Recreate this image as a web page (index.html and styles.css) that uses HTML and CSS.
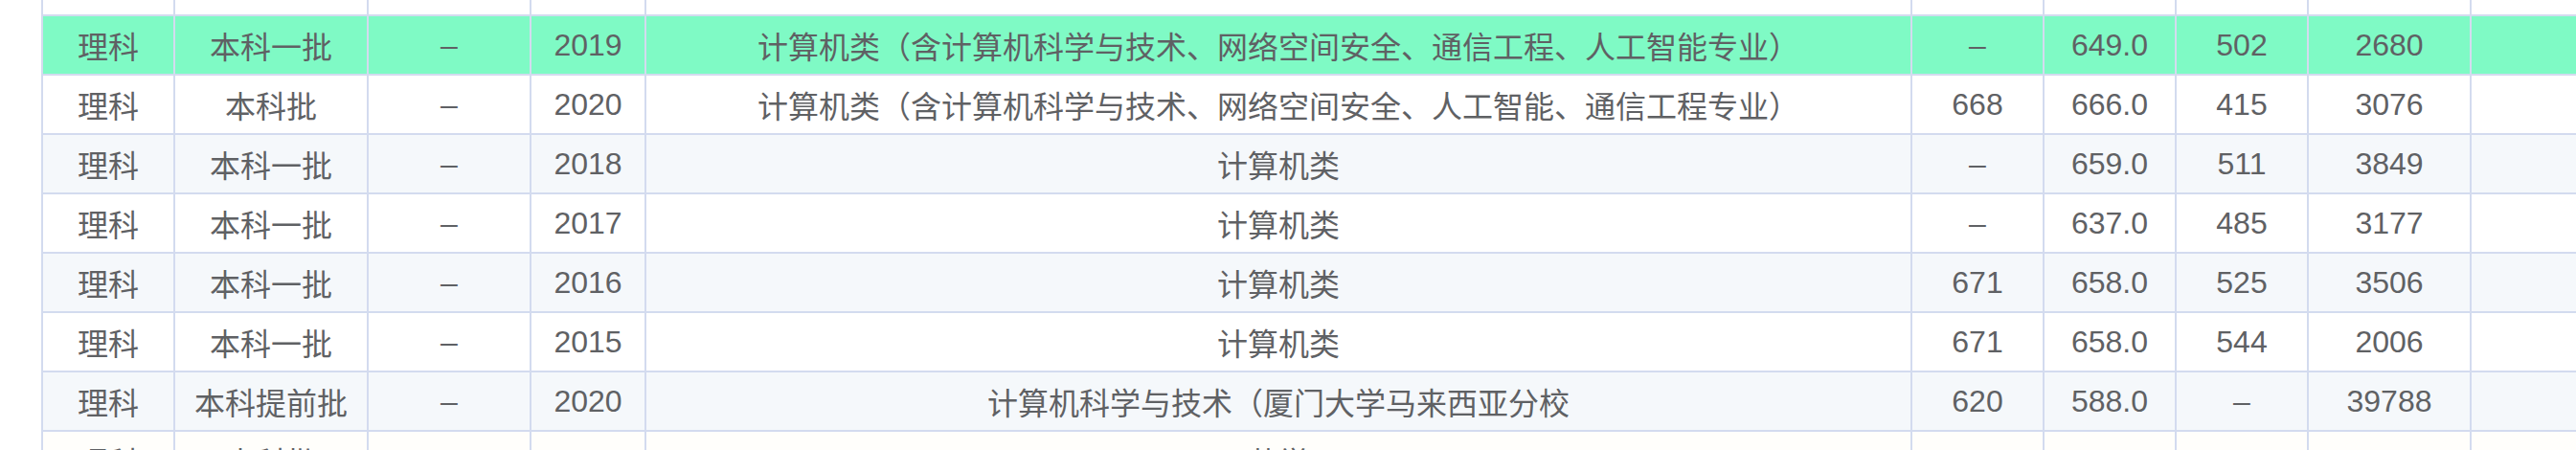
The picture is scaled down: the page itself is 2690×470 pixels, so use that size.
FILE: index.html
```html
<!DOCTYPE html>
<html lang="zh-CN">
<head>
<meta charset="utf-8">
<title>计算机类录取分数</title>
<link rel="stylesheet" href="styles.css">
</head>
<body>
<div class="wrap">
  <div class="grid">
    <div class="row top"><div></div><div></div><div></div><div></div><div></div><div></div><div></div><div></div><div></div><div></div></div>
    <div class="row hl"><div>理科</div><div>本科一批</div><div>–</div><div>2019</div><div>计算机类（含计算机科学与技术、网络空间安全、通信工程、人工智能专业）</div><div>–</div><div>649.0</div><div>502</div><div>2680</div><div></div></div>
    <div class="row"><div>理科</div><div>本科批</div><div>–</div><div>2020</div><div>计算机类（含计算机科学与技术、网络空间安全、人工智能、通信工程专业）</div><div>668</div><div>666.0</div><div>415</div><div>3076</div><div></div></div>
    <div class="row stripe"><div>理科</div><div>本科一批</div><div>–</div><div>2018</div><div>计算机类</div><div>–</div><div>659.0</div><div>511</div><div>3849</div><div></div></div>
    <div class="row"><div>理科</div><div>本科一批</div><div>–</div><div>2017</div><div>计算机类</div><div>–</div><div>637.0</div><div>485</div><div>3177</div><div></div></div>
    <div class="row stripe"><div>理科</div><div>本科一批</div><div>–</div><div>2016</div><div>计算机类</div><div>671</div><div>658.0</div><div>525</div><div>3506</div><div></div></div>
    <div class="row"><div>理科</div><div>本科一批</div><div>–</div><div>2015</div><div>计算机类</div><div>671</div><div>658.0</div><div>544</div><div>2006</div><div></div></div>
    <div class="row stripe"><div>理科</div><div>本科提前批</div><div>–</div><div>2020</div><div>计算机科学与技术（厦门大学马来西亚分校</div><div>620</div><div>588.0</div><div>–</div><div>39788</div><div></div></div>
    <div class="row last"><div>理科</div><div>本科批</div><div>–</div><div>2020</div><div>药学</div><div>633</div><div>633.0</div><div>417</div><div>3293</div><div></div></div>
  </div>
</div>
</body>
</html>
```
FILE: styles.css
```css
html, body {
  margin: 0;
  padding: 0;
  overflow: hidden;
  background: #ffffff;
}
.wrap {
  width: 2690px;
  height: 470px;
  overflow: hidden;
  padding-left: 43px;
}
.grid {
  display: grid;
  grid-template-columns: 136px 200px 168px 118px 1320px 136px 136px 136px 168px 200px;
  grid-auto-rows: 60px;
  grid-template-rows: 15px;
  gap: 2px;
  padding-left: 2px;
  background: #d3dbef;
  width: max-content;
  font-family: "Liberation Sans", "Noto Sans CJK SC", sans-serif;
  font-size: 32px;
  color: #5f6164;
}
.row {
  display: contents;
}
.row > div {
  background: #ffffff;
  display: flex;
  align-items: center;
  justify-content: center;
  white-space: nowrap;
  overflow: hidden;
}
.row.hl > div {
  background: #7ffac5;
}
.row.stripe > div {
  background: #f5f8fb;
}
.row.last > div {
  background: #fffefb;
}
```
